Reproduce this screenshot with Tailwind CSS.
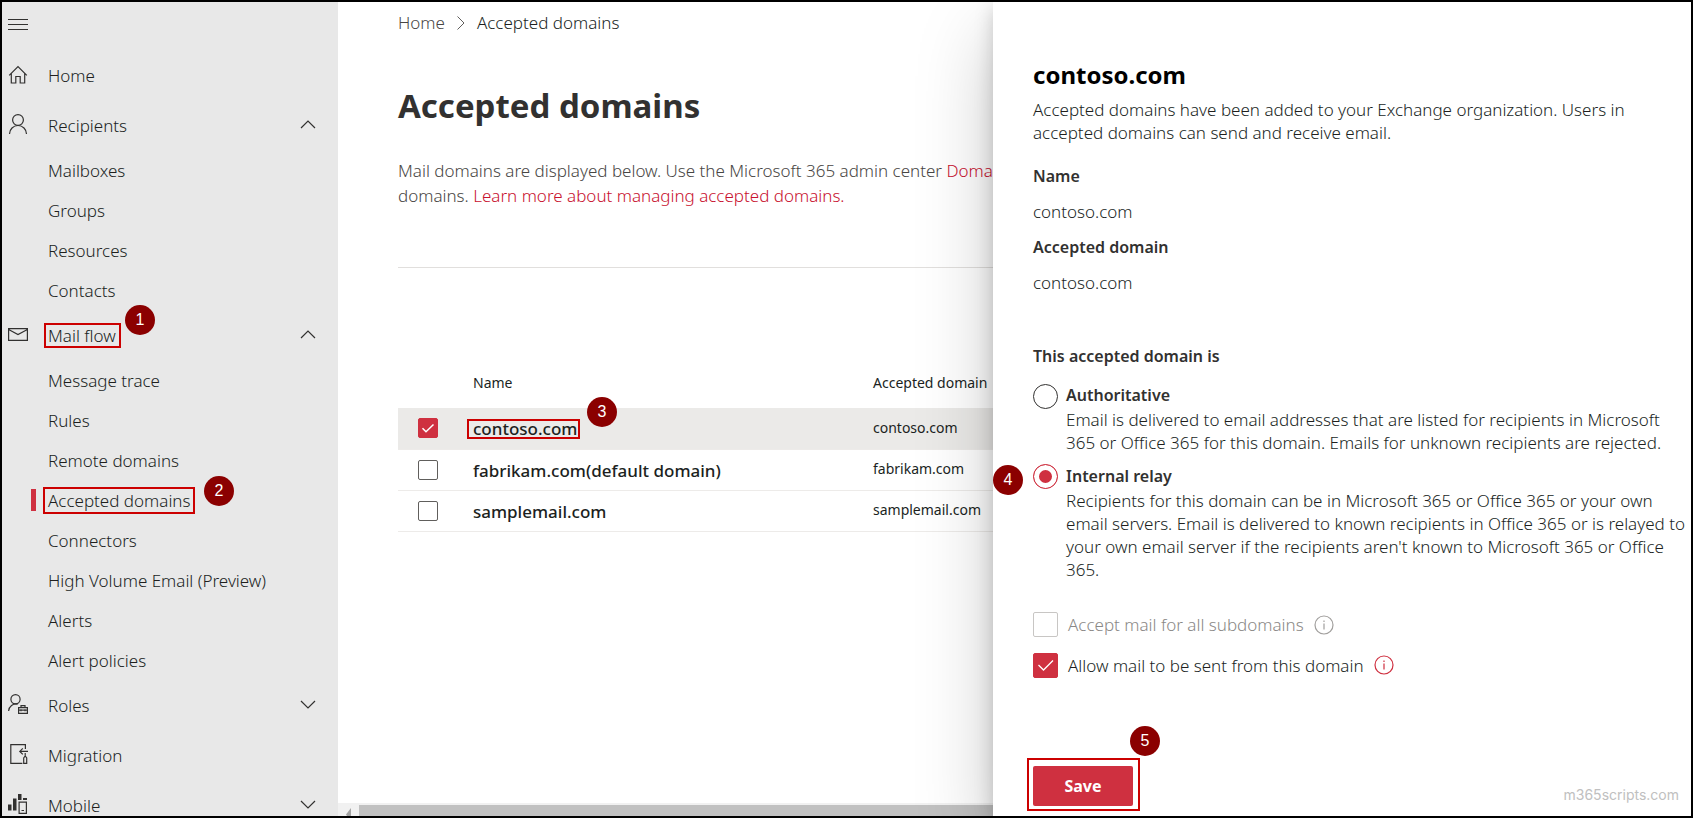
<!DOCTYPE html>
<html lang="en">
<head>
<meta charset="utf-8">
<title>Accepted domains</title>
<script src="https://cdn.jsdelivr.net/npm/@tailwindcss/browser@4"></script>
</head>
<body class="font-['Noto_Sans','Open_Sans',sans-serif] text-[17px] font-light text-[#201f1e]">
<div class="flex h-screen overflow-hidden border-2 border-black bg-white">

  <!-- Navigation -->
  <nav class="flex w-[336px] shrink-0 flex-col overflow-hidden bg-[#e8e8e8]" aria-label="Main">
    <button type="button" class="flex h-12 shrink-0 items-center pl-1.5" aria-label="Menu">
      <svg class="mb-0.5 h-5 w-5" viewBox="0 0 20 20" fill="none" stroke="#323130"><path d="M0 4.500h20M0 9.500h20M0 14.500h20"/></svg>
    </button>
    <a href="#" class="flex h-[50px] shrink-0 items-center pl-1.5">
      <svg class="h-5 w-5" viewBox="0 0 20 20" fill="none" stroke="#323130" stroke-width="1.200"><path d="M1.200 10.300 10 1.500l8.800 8.800M3.300 8.500v9.500h4.500v-6.500h4.400v6.500h4.500V8.500"/></svg>
      <span class="ml-5 pt-0.5">Home</span>
    </a>
    <button type="button" class="flex h-[50px] shrink-0 items-center pr-[22px] pl-1.5">
      <svg class="mb-0.5 h-5 w-5" viewBox="0 0 20 20" fill="none" stroke="#323130" stroke-width="1.200"><circle cx="10" cy="6" r="5.400"/><path d="M1.500 20a8.500 8.500 0 0 1 17 0"/></svg>
      <span class="ml-5 flex-1 pt-0.5 text-left">Recipients</span>
      <svg class="mb-0.5 h-4 w-4" viewBox="0 0 16 16" fill="none" stroke="#323130" stroke-width="1.200"><path d="m1 12 7-7 7 7"/></svg>
    </button>
    <a href="#" class="flex h-10 shrink-0 items-center pt-0.5 pl-[46px]">Mailboxes</a>
    <a href="#" class="flex h-10 shrink-0 items-center pt-0.5 pl-[46px]">Groups</a>
    <a href="#" class="flex h-10 shrink-0 items-center pt-0.5 pl-[46px]">Resources</a>
    <a href="#" class="flex h-10 shrink-0 items-center pt-0.5 pl-[46px]">Contacts</a>
    <button type="button" class="flex h-[50px] shrink-0 items-center pr-[22px] pl-1.5">
      <svg class="h-5 w-5" viewBox="0 0 20 20" fill="none" stroke="#323130" stroke-width="1.200"><path d="M.6 3.600h18.800v11.800H.6zM.6 4.500l9.400 5 9.400-5"/></svg>
      <span class="flex flex-1 pl-4">
        <span class="relative min-w-[77px] border-2 border-[#c00] px-0.5 text-left leading-[21px]">Mail flow
          <span class="absolute -top-5 left-full ml-1.5 flex h-[30px] w-[30px] items-center justify-center rounded-full bg-[#8b0000] font-['Liberation_Sans',sans-serif] text-[16px] text-white">1</span>
        </span>
      </span>
      <svg class="mb-0.5 h-4 w-4" viewBox="0 0 16 16" fill="none" stroke="#323130" stroke-width="1.200"><path d="m1 12 7-7 7 7"/></svg>
    </button>
    <a href="#" class="flex h-10 shrink-0 items-center pt-0.5 pl-[46px]">Message trace</a>
    <a href="#" class="flex h-10 shrink-0 items-center pt-0.5 pl-[46px]">Rules</a>
    <a href="#" class="flex h-10 shrink-0 items-center pt-0.5 pl-[46px]">Remote domains</a>
    <a href="#" class="flex h-10 shrink-0 items-center pl-[29px]" aria-current="page">
      <span class="h-[22px] w-[5px] bg-[#cf3040]"></span>
      <span class="relative ml-[7px] min-w-[152px] border-2 border-[#c00] pl-[3px] leading-[23px]">Accepted domains
        <span class="absolute -top-[13px] left-full ml-[11px] flex h-[30px] w-[30px] items-center justify-center rounded-full bg-[#8b0000] font-['Liberation_Sans',sans-serif] text-[16px] text-white">2</span>
      </span>
    </a>
    <a href="#" class="flex h-10 shrink-0 items-center pt-0.5 pl-[46px]">Connectors</a>
    <a href="#" class="flex h-10 shrink-0 items-center pt-0.5 pl-[46px]">High Volume Email (Preview)</a>
    <a href="#" class="flex h-10 shrink-0 items-center pt-0.5 pl-[46px]">Alerts</a>
    <a href="#" class="flex h-10 shrink-0 items-center pt-0.5 pl-[46px]">Alert policies</a>
    <button type="button" class="flex h-[50px] shrink-0 items-center pr-[22px] pl-1.5">
      <svg class="mb-0.5 h-5 w-5" viewBox="0 0 20 20" fill="none" stroke="#323130" stroke-width="1.200"><circle cx="7.500" cy="5.200" r="4.600"/><path d="M.6 17a7.500 7.500 0 0 1 9-6.900M10.600 13.600h8.800v5.800h-8.800zM10.600 16.200h8.800M13 13.600v-2h4v2M13 15.200v2M17 15.200v2"/></svg>
      <span class="ml-5 flex-1 pt-0.5 text-left">Roles</span>
      <svg class="h-4 w-4" viewBox="0 0 16 16" fill="none" stroke="#323130" stroke-width="1.200"><path d="m1 4 7 7 7-7"/></svg>
    </button>
    <a href="#" class="flex h-[50px] shrink-0 items-center pl-1.5">
      <svg class="mb-0.5 h-5 w-5" viewBox="0 0 20 20" fill="none" stroke="#323130" stroke-width="1.200"><path d="M17.400 5V.6H2.800v18.800h11.600M20 7.400h-8M14.800 4.400l-3 3 3 3M17.200 9v3.500M15.700 19.400v-5.500l1.500-2 1.500 2v5.500z"/></svg>
      <span class="ml-5 pt-0.5">Migration</span>
    </a>
    <button type="button" class="flex h-[50px] shrink-0 items-center pr-[22px] pl-1.5">
      <svg class="mb-0.5 h-5 w-5" viewBox="0 0 20 20" fill="#323130"><path d="M0 10.500h3.500v6H0zM5 4.500h3.500v12H5zM10 0h3.500v6H10zM15 4h4v2h-4z"/><path d="M11.100 8.100h7.300v11.300h-7.300zM13.500 16.500h2.500" fill="none" stroke="#323130" stroke-width="1.200"/></svg>
      <span class="ml-5 flex-1 pt-0.5 text-left">Mobile</span>
      <svg class="h-4 w-4" viewBox="0 0 16 16" fill="none" stroke="#323130" stroke-width="1.200"><path d="m1 4 7 7 7-7"/></svg>
    </button>
  </nav>

  <!-- Content -->
  <main class="flex min-w-0 flex-1 flex-col overflow-hidden">
    <div class="flex-1 overflow-hidden pl-[60px] whitespace-nowrap">
      <nav class="flex h-[42px] items-center" aria-label="Breadcrumb">
        <a href="#" class="text-[#484644]">Home</a>
        <svg class="mx-2 h-4 w-4" viewBox="0 0 16 16" fill="none" stroke="#605e5c"><path d="m4.500 1.500 6.500 6.500-6.500 6.500"/></svg>
        <span>Accepted domains</span>
      </nav>
      <h1 class="mt-[38px] text-[33px] leading-[48px] font-bold text-[#323130]">Accepted domains</h1>
      <p class="mt-7 leading-[25px] text-[#484644]">Mail domains are displayed below. Use the Microsoft 365 admin center <a href="#" class="text-[#c8102e]">Domains</a><br>domains. <a href="#" class="text-[#c8102e]">Learn more about managing accepted domains.</a></p>
      <hr class="mt-[59px] border-[#e1dfdd]">
      <table class="mt-[90px] w-full min-w-[700px] table-fixed text-left">
        <thead>
          <tr class="h-[50px] text-[14px]">
            <th class="w-[75px]"></th>
            <th class="w-[400px] pb-0.5 font-normal">Name</th>
            <th class="pb-0.5 font-normal">Accepted domain</th>
          </tr>
        </thead>
        <tbody>
          <tr class="h-[41px] border-b border-[#edebe9] bg-[#ebeae8]">
            <td class="pl-5"><label class="relative block h-5 w-5"><input type="checkbox" checked aria-label="Select contoso.com" class="block h-5 w-5 appearance-none rounded-xs border border-[#605e5c] bg-white checked:border-[#cf3040] checked:bg-[#cf3040]"><svg class="absolute inset-0 h-5 w-5" viewBox="0 0 20 20" fill="none" stroke="#fff" stroke-width="1.500"><path d="m4.500 10.200 3.500 3.600 7.500-7.300"/></svg></label></td>
            <td class="pt-0.5 text-[17px] font-medium"><span class="relative -ml-1.5 block w-[113px] border-2 border-[#c00] px-1 leading-4">contoso.com<span class="absolute -top-6 left-full ml-[9px] flex h-[30px] w-[30px] items-center justify-center rounded-full bg-[#8b0000] font-['Liberation_Sans',sans-serif] text-[16px] font-normal text-white">3</span></span></td>
            <td class="pb-0.5 text-[14px] font-normal">contoso.com</td>
          </tr>
          <tr class="h-[41px] border-b border-[#edebe9]">
            <td class="pl-5"><input type="checkbox" aria-label="Select fabrikam.com" class="block h-5 w-5 appearance-none rounded-xs border border-[#605e5c] bg-white"></td>
            <td class="pt-0.5 text-[17px] font-medium">fabrikam.com(default domain)</td>
            <td class="pb-0.5 text-[14px] font-normal">fabrikam.com</td>
          </tr>
          <tr class="h-[41px] border-b border-[#edebe9]">
            <td class="pl-5"><input type="checkbox" aria-label="Select samplemail.com" class="block h-5 w-5 appearance-none rounded-xs border border-[#605e5c] bg-white"></td>
            <td class="pt-0.5 text-[17px] font-medium">samplemail.com</td>
            <td class="pb-0.5 text-[14px] font-normal">samplemail.com</td>
          </tr>
        </tbody>
      </table>
    </div>
    <div class="flex h-[13px] shrink-0 bg-[#f1f1f1] pt-0.5">
      <svg class="h-[11px] w-[21px]" viewBox="0 0 21 11" fill="#a3a3a3"><path d="M13 3v8H9l-1-1.500z"/></svg>
      <div class="flex-1 bg-[#c1c1c1]"></div>
    </div>
  </main>

  <!-- Details panel -->
  <aside class="relative z-10 flex w-[698px] shrink-0 flex-col bg-white pl-10 whitespace-nowrap shadow-[0_32px_72px_rgba(0,0,0,0.22),0_6px_18px_rgba(0,0,0,0.18)]">
    <h2 class="mt-[57px] text-[24px] leading-8 font-bold text-black">contoso.com</h2>
    <p class="mt-[7px] leading-[23px]">Accepted domains have been added to your Exchange organization. Users in<br>accepted domains can send and receive email.</p>
    <dl class="mt-5 leading-6">
      <dt class="text-[16px] font-semibold text-[#323130]">Name</dt>
      <dd class="mt-3">contoso.com</dd>
      <dt class="mt-[11px] text-[16px] font-semibold text-[#323130]">Accepted domain</dt>
      <dd class="mt-3">contoso.com</dd>
    </dl>
    <fieldset class="mt-[49px]">
      <legend class="text-[16px] leading-6 font-semibold text-[#323130]">This accepted domain is</legend>
      <div class="mt-[15px] flex gap-2">
        <input type="radio" name="kind" id="authoritative" class="mt-px h-[25px] w-[25px] shrink-0 appearance-none rounded-full border border-[#323130]">
        <div>
          <label for="authoritative" class="block text-[16px] leading-6 font-semibold text-[#323130]">Authoritative</label>
          <p class="mt-px leading-[23px]">Email is delivered to email addresses that are listed for recipients in Microsoft<br>365 or Office 365 for this domain. Emails for unknown recipients are rejected.</p>
        </div>
      </div>
      <div class="relative mt-2.5 flex gap-2">
        <span class="absolute top-px -left-10 flex h-[30px] w-[30px] items-center justify-center rounded-full bg-[#8b0000] font-['Liberation_Sans',sans-serif] text-[16px] text-white">4</span>
        <input type="radio" name="kind" id="relay" checked class="h-[25px] w-[25px] shrink-0 appearance-none rounded-full border border-[#cf3040] bg-[#cf3040] shadow-[inset_0_0_0_5px_#fff]">
        <div>
          <label for="relay" class="block text-[16px] leading-6 font-semibold text-[#323130]">Internal relay</label>
          <p class="mt-px leading-[23px]">Recipients for this domain can be in Microsoft 365 or Office 365 or your own<br>email servers. Email is delivered to known recipients in Office 365 or is relayed to<br>your own email server if the recipients aren't known to Microsoft 365 or Office<br>365.</p>
        </div>
      </div>
    </fieldset>
    <div class="mt-[31px] flex items-center">
      <input type="checkbox" id="subdomains" disabled class="h-[25px] w-[25px] appearance-none rounded-xs border border-[#c8c6c4] bg-white">
      <label for="subdomains" class="ml-2.5 text-[#8a8886]">Accept mail for all subdomains</label>
      <svg class="ml-2.5 h-5 w-5" viewBox="0 0 20 20" fill="none" stroke="#a19f9d" stroke-width="1.200"><circle cx="10" cy="10" r="9"/><path d="M10 8.500v6M10 5.500v1.500"/></svg>
    </div>
    <div class="mt-[15px] flex items-center">
      <span class="relative"><input type="checkbox" id="allow" checked class="block h-[25px] w-[25px] appearance-none rounded-xs border border-[#cf3040] bg-[#cf3040]"><svg class="pointer-events-none absolute inset-0 h-[25px] w-[25px]" viewBox="0 0 25 25" fill="none" stroke="#fff" stroke-width="1.300"><path d="m5.500 12 5 5L20 7.500"/></svg></span>
      <label for="allow" class="ml-2.5">Allow mail to be sent from this domain</label>
      <svg class="ml-2.5 h-5 w-5" viewBox="0 0 20 20" fill="none" stroke="#cf3040" stroke-width="1.200"><circle cx="10" cy="10" r="9"/><path d="M10 8.500v6M10 5.500v1.500"/></svg>
    </div>
    <div class="mt-auto mb-[5px] flex items-end justify-between pr-3">
      <div class="relative -ml-1.5 border-2 border-[#c00] pt-1.5 pr-[5px] pb-[3px] pl-1">
        <button type="button" class="block h-10 w-[100px] rounded-xs bg-[#cf3040] text-[16px] font-bold text-white">Save</button>
        <span class="absolute -top-[34px] -right-[22px] flex h-[30px] w-[30px] items-center justify-center rounded-full bg-[#8b0000] font-['Liberation_Sans',sans-serif] text-[16px] text-white">5</span>
      </div>
      <span class="mb-1.5 font-['Inter',sans-serif] text-[14px] font-normal text-[#c0c0c0]">m365scripts.com</span>
    </div>
  </aside>
</div>
</body>
</html>
